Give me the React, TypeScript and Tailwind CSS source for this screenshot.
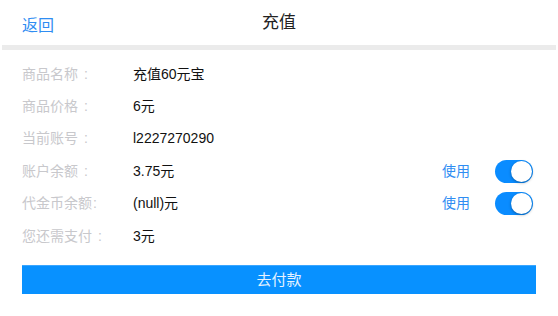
import React from 'react';

const font = { fontFamily: '"Liberation Sans", "Noto Sans CJK SC", sans-serif' };

interface Row {
  label: string;
  colon: string;
  value: string;
  toggle?: boolean;
}

const rows: Row[] = [
  { label: '商品名称', colon: 'ml-[6px]', value: '充值60元宝' },
  { label: '商品价格', colon: 'ml-[6px]', value: '6元' },
  { label: '当前账号', colon: 'ml-[6px]', value: 'l2227270290' },
  { label: '账户余额', colon: 'ml-[6px]', value: '3.75元', toggle: true },
  { label: '代金币余额', colon: 'ml-[1px]', value: '(null)元', toggle: true },
  { label: '您还需支付', colon: 'ml-[6px]', value: '3元' },
];

function Toggle() {
  return (
    <div className="relative w-[38px] h-[23px] rounded-full bg-[#0a8cff]">
      <div className="absolute right-[1px] top-[1px] w-[21px] h-[21px] rounded-full bg-white shadow-[0_1px_3px_rgba(0,0,0,0.35)]" />
    </div>
  );
}

export default function App() {
  return (
    <div className="w-[558px] h-[316px] bg-white overflow-hidden" style={font}>
      <div className="relative h-[45px] flex items-center justify-center">
        <span className="absolute left-[22px] top-[14px] text-[16px] text-[#2f8df2]">返回</span>
        <span className="text-[17px] text-[#222]">充值</span>
      </div>
      <div className="mx-[2px] h-[5px] bg-[#ebebeb]" />

      <div className="pt-[8px]">
        {rows.map((row, i) => (
          <div key={i} className="h-[32.4px] flex items-center pl-[22px] pr-[25px] text-[14px]">
            <span className="w-[111px] text-[#c8c8cc]">
              {row.label}
              <span className={row.colon}>:</span>
            </span>
            <span className="flex-1 text-[#111]">{row.value}</span>
            {row.toggle && (
              <div className="flex items-center gap-[25px]">
                <span className="text-[14px] text-[#2f8df2]">使用</span>
                <Toggle />
              </div>
            )}
          </div>
        ))}
      </div>

      <div className="mx-[22px] mt-[13px] h-[29px] bg-[#0891ff] border-t border-[#3aa6ff] flex items-center justify-center">
        <span className="text-[15px] text-[#e6f3ff]">去付款</span>
      </div>
    </div>
  );
}
